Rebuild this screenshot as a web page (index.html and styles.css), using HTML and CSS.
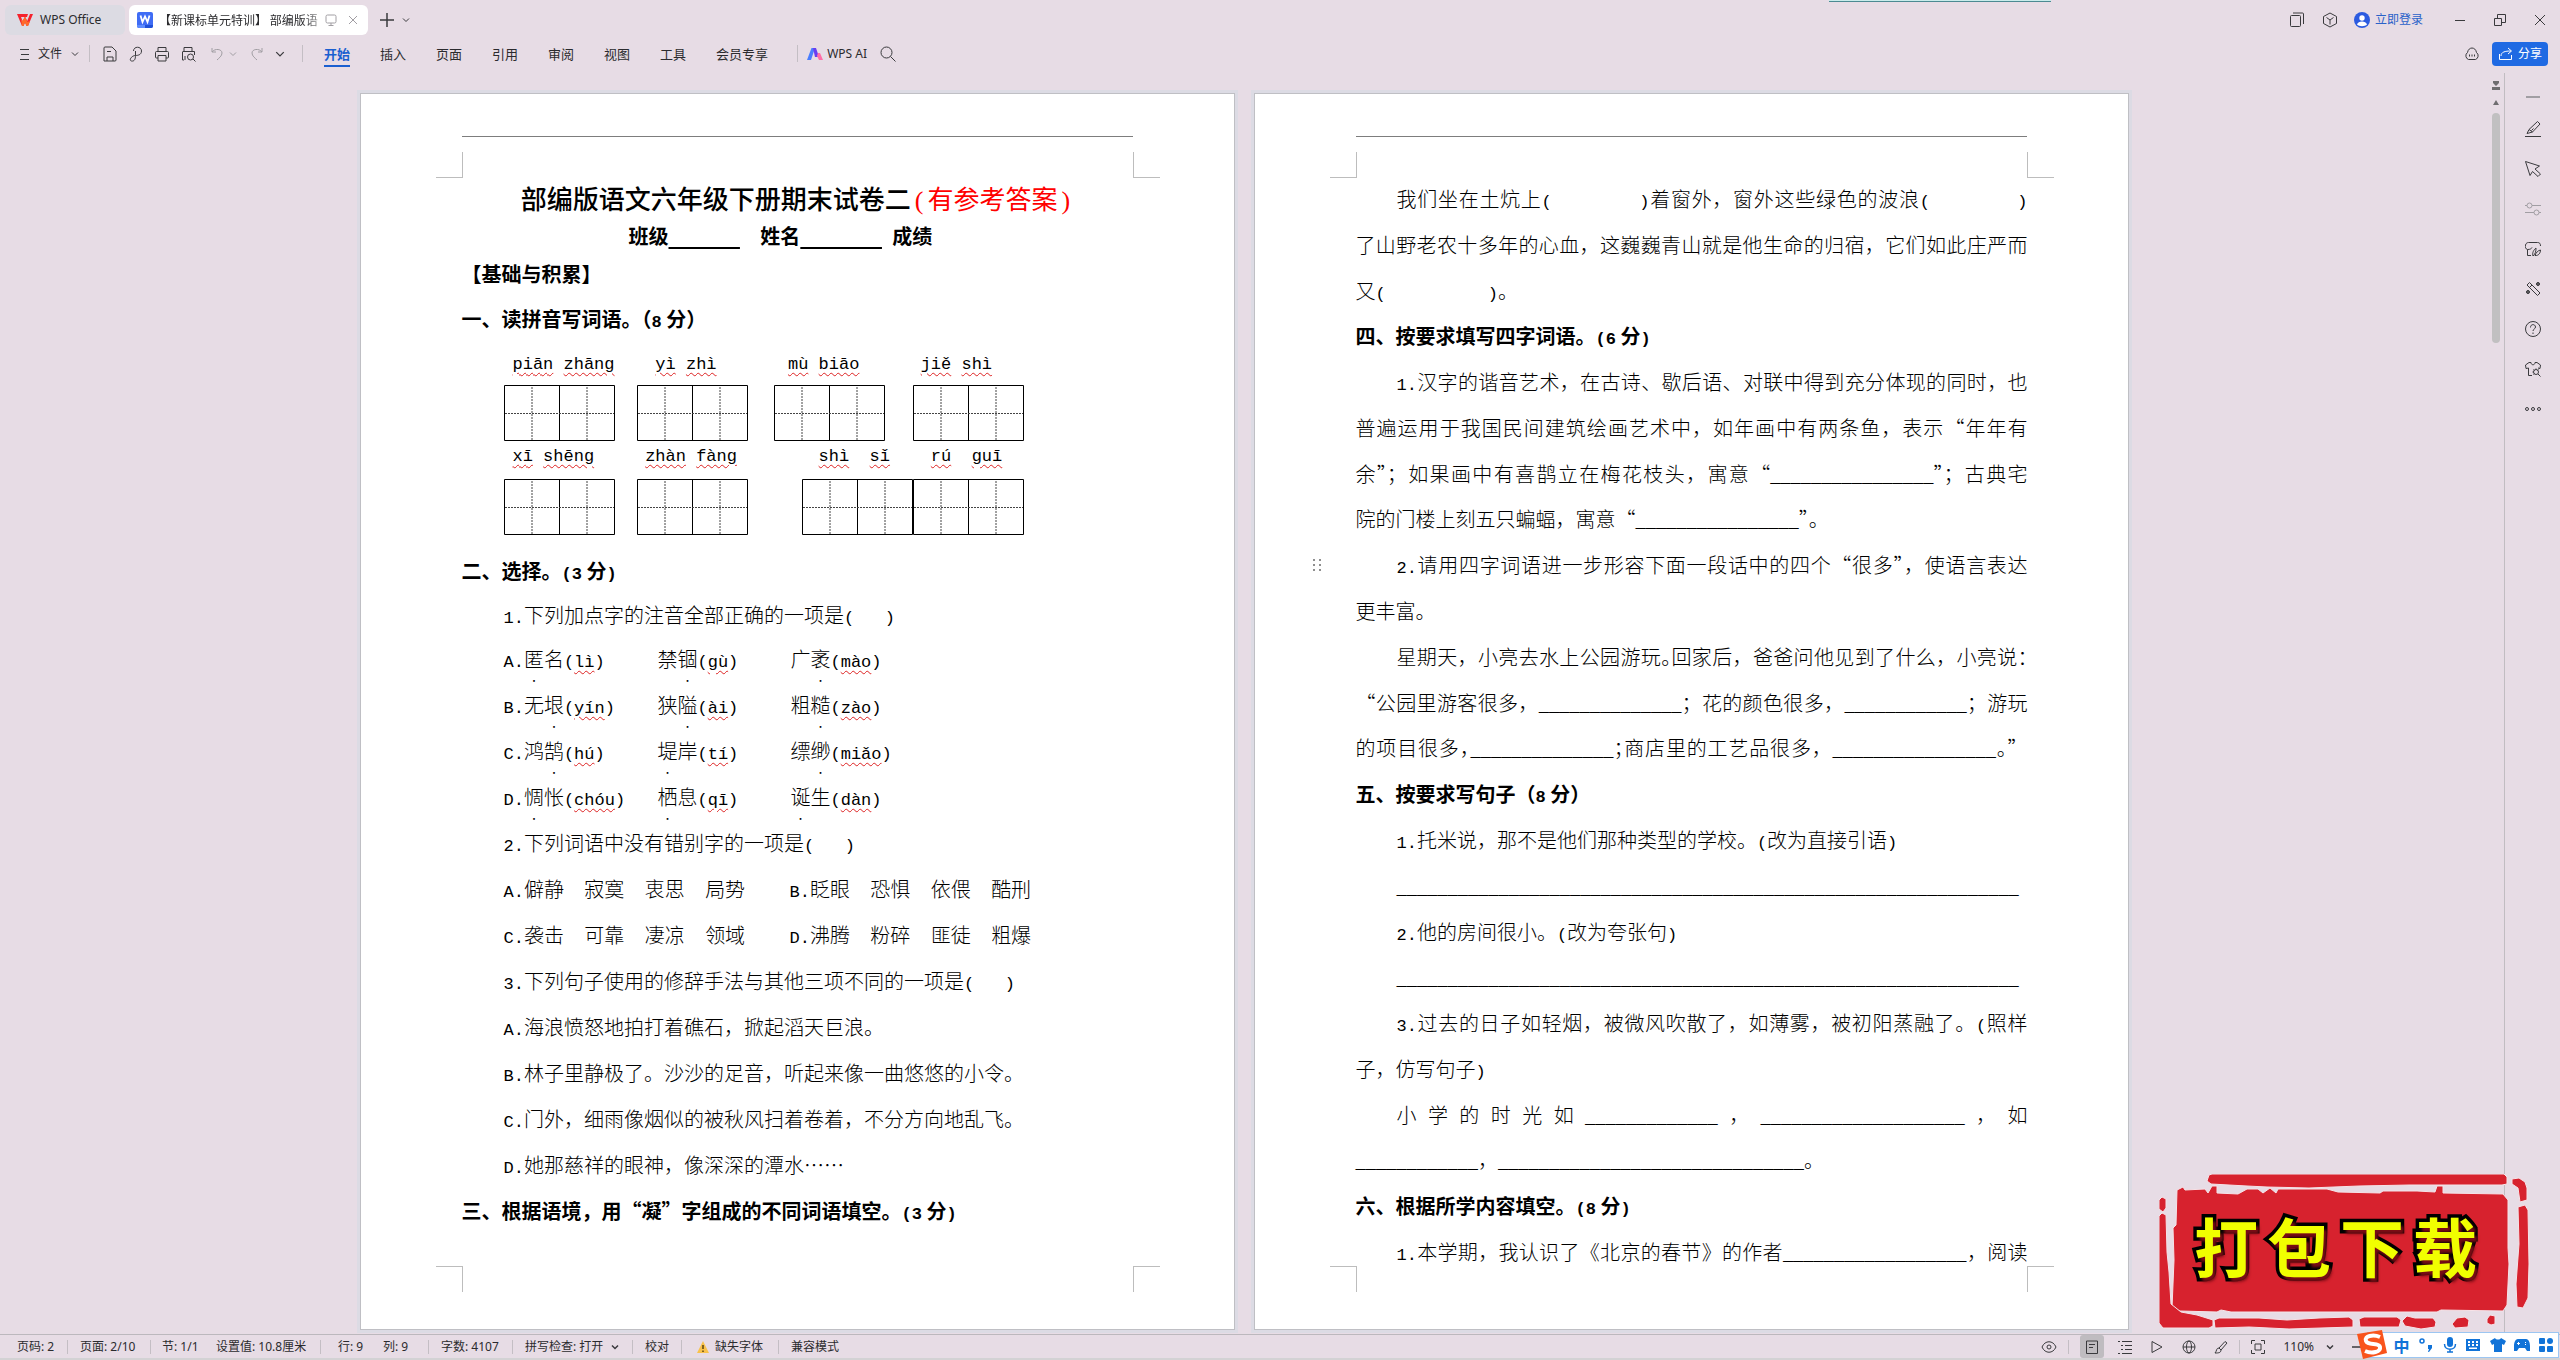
FILE: index.html
```html
<!DOCTYPE html>
<html lang="zh-CN">
<head>
<meta charset="utf-8">
<title>【新课标单元特训】 部编版语文 - WPS Office</title>
<link rel="stylesheet" href="styles.css">
</head>
<body>
<svg class="defs" aria-hidden="true">
  <symbol id="chev" viewBox="0 0 8 8"><path d="M1 2.5 4 5.5 7 2.5"/></symbol>
  <symbol id="tian" viewBox="0 0 111 56">
    <path d="M.5 .5h110v55H.5zM55.5 0v56"/>
    <path stroke-dasharray="2 1" d="M28 2v53M83 2v53M1 28.5h109" stroke="#444"/>
  </symbol>
</svg>

<header class="tabbar">
  <button class="tab home">
    <svg width="16" height="12" viewBox="0 0 16 12"><path fill="#f5222d" d="M0 0h11l-1 3H4l1.600 4L8 2.500 10.200 7 13 0h3l-5 12H9.500L8 8.500 6.500 12H5z"/><path fill="#ff6a2a" d="M6.500 12 8 8.500 9.500 12H11l2-5-2.500 1L8 2.500 5.600 7 4 5l1 7z"/></svg>
    <span>WPS Office</span>
  </button>
  <div class="tab active">
    <svg width="16" height="16" viewBox="0 0 16 16"><rect width="16" height="16" rx="2" fill="#3f6cf5"/><path d="M0 13h8v3H2a2 2 0 0 1-2-2z" fill="#5d8bff"/><path d="M8 13h8v1a2 2 0 0 1-2 2H8z" fill="#1f50d8"/><path d="M3.500 3.500 5.500 10 8 4.500 10.500 10l2-6.500" fill="none" stroke="#fff" stroke-width="1.800"/></svg>
    <span class="tabname">【新课标单元特训】 部编版语</span>
    <svg class="ic soft" width="14" height="14" viewBox="0 0 14 14"><rect x="2" y="2" width="10" height="8" rx="1.500"/><path d="M4.500 12.500h5M7 10v2.500"/></svg>
    <button class="flat" aria-label="关闭标签"><svg class="ic soft" width="10" height="10" viewBox="0 0 10 10"><path d="m1 1 8 8M9 1 1 9"/></svg></button>
  </div>
  <button class="flat plus" aria-label="新建"><svg class="ic thick" width="14" height="14" viewBox="0 0 14 14"><path d="M7 0v14M0 7h14"/></svg></button>
  <button class="flat" aria-label="标签列表"><svg class="ic" width="8" height="8"><use href="#chev"/></svg></button>
  <div class="toast"></div>
  <div class="winctl">
    <svg class="ic" width="16" height="16" viewBox="0 0 16 16"><rect x="1.500" y="3.500" width="10" height="11" rx="1"/><path d="M4 1h9.500a1 1 0 0 1 1 1v10"/></svg>
    <svg class="ic" width="16" height="16" viewBox="0 0 16 16"><path d="m8 1 6.500 3.500v7L8 15l-6.500-3.500v-7zM4.500 5.500 8 8l3.500-2.500M8 8v4.500"/></svg>
    <button class="flat login"><svg width="16" height="16" viewBox="0 0 16 16"><circle cx="8" cy="8" r="8" fill="#2c5be0"/><circle cx="8" cy="6" r="2.700" fill="#fff"/><path d="M3 12.500c1-4 9-4 10 0-2 2.300-8 2.300-10 0z" fill="#fff"/></svg>立即登录</button>
    <button class="flat w40" aria-label="最小化"><svg class="ic" width="10" height="10" viewBox="0 0 10 10"><path d="M0 5.500h10"/></svg></button>
    <button class="flat w40" aria-label="还原"><svg class="ic" width="14" height="14" viewBox="0 0 14 14"><path d="M1.500 5.500h7v7h-7zM4.500 5V1.500h8v8H9"/></svg></button>
    <button class="flat w40" aria-label="关闭"><svg class="ic" width="12" height="12" viewBox="0 0 12 12"><path d="m1 1 10 10M11 1 1 11"/></svg></button>
  </div>
</header>

<nav class="menubar">
  <button class="flat file"><svg class="ic" width="9" height="12" viewBox="0 0 9 12"><path d="M0 1.500h9M1 6.500h8M0 11.500h9"/></svg>文件<svg class="ic" width="8" height="8"><use href="#chev"/></svg></button>
  <i class="vsep"></i>
  <div class="quick">
    <svg class="ic" width="16" height="16" viewBox="0 0 16 16"><path d="M2 2a1 1 0 0 1 1-1h7l4 4v9a1 1 0 0 1-1 1H2zM5 5.500h4M5 15v-4h6v4"/></svg>
    <svg class="ic" width="16" height="16" viewBox="0 0 16 16"><path d="M5.500 5c0-5 8-5 8 0 0 4-4 4.500-6 4.500-4 0-7 5-4 5.500 3 .5 4-2 4-5.500V5"/></svg>
    <svg class="ic" width="16" height="16" viewBox="0 0 16 16"><path d="M4 5V1.500h8V5M4 12H2.500A1 1 0 0 1 1.500 11V6.500a1 1 0 0 1 1-1h11a1 1 0 0 1 1 1V11a1 1 0 0 1-1 1H12M4 9.500h8V15H4z"/></svg>
    <svg class="ic" width="16" height="16" viewBox="0 0 16 16"><path d="M4 5V1.500h8V5M4 14H2.500V6a.5.5 0 0 1 .5-.5h11.500V9M5 14v-4"/><circle cx="10.500" cy="11" r="3"/><path d="m13 13 2.500 2.500"/></svg>
  </div>
  <div class="undo">
    <svg class="ic soft" width="12" height="14" viewBox="0 0 12 14"><path d="M1 1v4h4M1 5c3-4 10-3 10 1 0 3-3 5-5 7"/></svg>
    <svg class="ic soft" width="8" height="8"><use href="#chev"/></svg>
    <svg class="ic soft redo" width="12" height="14" viewBox="0 0 12 14"><path d="M11 1v4H7M11 5C8 1 1 2 1 6c0 3 3 5 5 7"/></svg>
    <svg class="ic" width="10" height="10"><use href="#chev"/></svg>
  </div>
  <i class="vsep"></i>
  <div class="menus">
    <a href="#" class="on">开始</a><a href="#">插入</a><a href="#">页面</a><a href="#">引用</a><a href="#">审阅</a><a href="#">视图</a><a href="#">工具</a><a href="#">会员专享</a>
  </div>
  <i class="vsep"></i>
  <button class="flat ai"><svg width="16" height="12" viewBox="0 0 16 12"><path d="M4.500 0H8L4 12H0z" fill="#4a7dff"/><path d="M6 0h3l3 9H8z" fill="#6a3df0"/><path d="m11 5 2 0 3 7h-4l-2-4z" fill="#ff6ea8"/></svg>WPS AI</button>
  <button class="flat" aria-label="搜索"><svg class="ic" width="16" height="16" viewBox="0 0 16 16"><circle cx="6.500" cy="6.500" r="5.500"/><path d="m10.500 10.500 5 5"/></svg></button>
  <div class="share">
    <svg class="ic" width="16" height="14" viewBox="0 0 16 14"><path d="M4.500 12.500a4 4 0 0 1-1-7c1-6 8-6 9 0a4 4 0 0 1-1 7z"/><path d="M5 8.500h1M7.500 8.500h1M10 8.500h1" stroke-width="2"/></svg>
    <button class="sharebtn"><svg class="ic" width="16" height="14" viewBox="0 0 16 14"><path d="M1.500 7v5.500h12V8M3 9c0-4 4-5 10-5M10 1l3.500 3L10 7"/></svg>分享</button>
  </div>
</nav>

<main class="work">
  <div class="canvas">
    <article class="paper">
      <div class="headrule"></div>
      <div class="crop top"><i></i><i></i></div>
      <section class="body one">
        <h1>部编版语文六年级下册期末试卷二<em><span class="wl">(</span>有参考答案<span class="wl">)</span></em></h1>
        <p class="who">班级<u class="l">       </u><span class="l">  </span>姓名<u class="l">        </u><span class="l"> </span>成绩</p>
        <h2 class="h40">【基础与积累】</h2>
        <h2 class="h50">一、读拼音写词语。（<span class="l">8</span> 分）</h2>
        <p class="pin l"><s>piān</s> <s>zhāng</s>    <s>yì</s> <s>zhì</s>       <s>mù</s> <s>biāo</s>      <s>jiě</s> <s>shì</s></p>
        <div class="boxes a">
          <svg><use href="#tian"/></svg><svg><use href="#tian"/></svg><svg><use href="#tian"/></svg><svg><use href="#tian"/></svg>
        </div>
        <p class="pin low l"><s>xī</s> <s>shēng</s>     <s>zhàn</s> <s>fàng</s>        <s>shì</s>  <s>sǐ</s>    <s>rú</s>  <s>guī</s></p>
        <div class="boxes b">
          <svg><use href="#tian"/></svg><svg><use href="#tian"/></svg><svg><use href="#tian"/></svg><svg><use href="#tian"/></svg>
        </div>
        <h2 class="sec">二、选择。<span class="l">(3</span> 分<span class="l">)</span></h2>
        <p class="in h42"><span class="l">1.</span>下列加点字的注音全部正确的一项是<span class="l">(   )</span></p>
        <div class="opts">
          <p><span class="l">A.</span><b>匿</b>名<span class="l">(<s>lì</s>)</span></p><p>禁<b>锢</b><span class="l">(<s>gù</s>)</span></p><p>广<b>袤</b><span class="l">(<s>mào</s>)</span></p>
          <p><span class="l">B.</span>无<b>垠</b><span class="l">(<s>yín</s>)</span></p><p>狭<b>隘</b><span class="l">(<s>ài</s>)</span></p><p>粗<b>糙</b><span class="l">(<s>zào</s>)</span></p>
          <p><span class="l">C.</span>鸿<b>鹄</b><span class="l">(<s>hú</s>)</span></p><p><b>堤</b>岸<span class="l">(<s>tí</s>)</span></p><p>缥<b>缈</b><span class="l">(<s>miǎo</s>)</span></p>
          <p><span class="l">D.</span><b>惆</b>怅<span class="l">(<s>chóu</s>)</span></p><p><b>栖</b>息<span class="l">(<s>qī</s>)</span></p><p><b>诞</b>生<span class="l">(<s>dàn</s>)</span></p>
        </div>
        <p class="in"><span class="l">2.</span>下列词语中没有错别字的一项是<span class="l">(   )</span></p>
        <div class="words">
          <p><span class="l">A.</span>僻静<span class="l">  </span>寂寞<span class="l">  </span>衷思<span class="l">  </span>局势</p><p><span class="l">B.</span>眨眼<span class="l">  </span>恐惧<span class="l">  </span>依偎<span class="l">  </span>酷刑</p>
          <p><span class="l">C.</span>袭击<span class="l">  </span>可靠<span class="l">  </span>凄凉<span class="l">  </span>领域</p><p><span class="l">D.</span>沸腾<span class="l">  </span>粉碎<span class="l">  </span>匪徒<span class="l">  </span>粗爆</p>
        </div>
        <p class="in"><span class="l">3.</span>下列句子使用的修辞手法与其他三项不同的一项是<span class="l">(   )</span></p>
        <p class="in"><span class="l">A.</span>海浪愤怒地拍打着礁石，掀起滔天巨浪。</p>
        <p class="in"><span class="l">B.</span>林子里静极了。沙沙的足音，听起来像一曲悠悠的小令。</p>
        <p class="in"><span class="l">C.</span>门外，细雨像烟似的被秋风扫着卷着，不分方向地乱飞。</p>
        <p class="in"><span class="l">D.</span>她那慈祥的眼神，像深深的潭水……</p>
        <h2>三、根据语境，用“凝”字组成的不同词语填空。<span class="l">(3</span> 分<span class="l">)</span></h2>
      </section>
      <div class="crop bot"><i></i><i></i></div>
    </article>

    <article class="paper">
      <div class="headrule"></div>
      <div class="crop top"><i></i><i></i></div>
      <svg class="grip" width="10" height="14" viewBox="0 0 10 14"><path d="M1 2h2M7 2h2M1 7h2M7 7h2M1 12h2M7 12h2"/></svg>
      <section class="body two">
        <p class="ti j">我们坐在土炕上<span class="l">(        )</span>着窗外，窗外这些绿色的波浪<span class="l">(        )</span></p>
        <p class="j">了山野老农十多年的心血，这巍巍青山就是他生命的归宿，它们如此庄严而</p>
        <p>又<span class="l">(          )</span>。</p>
        <h2>四、按要求填写四字词语。<span class="l">(6</span> 分<span class="l">)</span></h2>
        <p class="ti j"><span class="l">1.</span>汉字的谐音艺术，在古诗、歇后语、对联中得到充分体现的同时，也</p>
        <p class="j">普遍运用于我国民间建筑绘画艺术中，如年画中有两条鱼，表示“年年有</p>
        <p class="j">余”；如果画中有喜鹊立在梅花枝头，寓意“<span class="l">________________</span>”；古典宅</p>
        <p>院的门楼上刻五只蝙蝠，寓意“<span class="l">________________</span>”。</p>
        <p class="ti j"><span class="l">2.</span>请用四字词语进一步形容下面一段话中的四个“很多”，使语言表达</p>
        <p>更丰富。</p>
        <p class="ti j">星期天，小亮去水上公园游玩<span class="half">。</span>回家后，爸爸问他见到了什么，小亮说<span class="half">：</span></p>
        <p class="j">“公园里游客很多，<span class="l">______________</span>；花的颜色很多，<span class="l">____________</span>；游玩</p>
        <p class="j">的项目很多<span class="half">，</span><span class="l">______________</span><span class="half">；</span>商店里的工艺品很多，<span class="l">________________</span>。”</p>
        <h2>五、按要求写句子（<span class="l">8</span> 分）</h2>
        <p class="ti"><span class="l">1.</span>托米说，那不是他们那种类型的学校。<span class="l">(</span>改为直接引语<span class="l">)</span></p>
        <p class="ti"><span class="l">_____________________________________________________________</span></p>
        <p class="ti"><span class="l">2.</span>他的房间很小。<span class="l">(</span>改为夸张句<span class="l">)</span></p>
        <p class="ti"><span class="l">_____________________________________________________________</span></p>
        <p class="ti j"><span class="l">3.</span>过去的日子如轻烟，被微风吹散了，如薄雾，被初阳蒸融了。<span class="l">(</span>照样</p>
        <p>子，仿写句子<span class="l">)</span></p>
        <p class="ti j">小学的时光如<span class="l">_____________</span>，<span class="l">____________________</span>，如</p>
        <p><span class="l">____________</span>，<span class="l">______________________________</span>。</p>
        <h2>六、根据所学内容填空。<span class="l">(8</span> 分<span class="l">)</span></h2>
        <p class="ti j"><span class="l">1.</span>本学期，我认识了《北京的春节》的作者<span class="l">__________________</span>，阅读</p>
      </section>
      <div class="crop bot"><i></i><i></i></div>
    </article>
  </div>

  <div class="scroll">
    <svg width="8" height="28" viewBox="0 0 8 28"><path fill="#6f6d70" d="M1 0h6v2L4 5 1 2zM0 6h8v3H0zM4 19l3 5H1z"/></svg>
    <div class="thumb"></div>
  </div>
  <aside class="side">
    <svg class="ic soft" width="16" height="16" viewBox="0 0 16 16"><path d="M1 8h14" stroke-width="2"/></svg>
    <svg class="ic" width="16" height="16" viewBox="0 0 16 16"><path d="M0 15.500h16M2 12.500l2-4 8.500-8 2.500 2.500-7.500 8zM4 8.500 7.500 11M6.500 9.500l2-2"/></svg>
    <svg class="ic" width="16" height="16" viewBox="0 0 16 16"><path d="m.5.5 14 4.500-4.500 3 5.500 5-2.500 2.500-5.500-5-2.500 4z"/></svg>
    <svg class="ic soft" width="16" height="16" viewBox="0 0 16 16"><path d="M0 4.500h2M7 4.500h9M0 11.500h9M14 11.500h2"/><circle cx="4.500" cy="4.500" r="2.500"/><circle cx="11.500" cy="11.500" r="2.500"/></svg>
    <svg class="ic" width="16" height="16" viewBox="0 0 16 16"><path d="M6 14.500H2.500v-6C.5 8 0 6 .5 4s2-2.500 3-2.500h9c2 0 3 1 3 3.500M2.500 8.500c3 0 4-1 4.500-2M8 15c-1-3 .5-6 3-8 0 3-.5 6-3 8zm2-.5c1-3 3-5 5.500-5.500 0 3-2 6-5.500 5.500z"/></svg>
    <svg class="ic" width="16" height="16" viewBox="0 0 16 16"><path d="m2 4 2.500-2.500L15 12l-2.500 2.500zM4.500 6.500 7 4M13 1v4M11 3h4M3 9v4M1 11h4"/><circle cx="13" cy="3" r="1.500"/><circle cx="3" cy="11" r="1.500"/></svg>
    <svg class="ic" width="16" height="16" viewBox="0 0 16 16"><circle cx="8" cy="8" r="7.500"/><path d="M5.500 6.500c0-4 5-3.500 5-.5 0 2-2.500 2-2.500 4M8 11.500v1.500"/></svg>
    <svg class="ic" width="16" height="16" viewBox="0 0 16 16"><path d="M7 14.500H3.500V7L1 7.500.5 4 4 1.500h2c0 3 4 3 4 0h2L15.500 4 15 7.500l-2-.5"/><circle cx="11" cy="11" r="2.500"/><path d="M11 7.500v1M7.500 11h1M13 13l2.500 2.500M8.500 8.500l1 1M13.500 8.500l-1 1M8.500 13.500l1-1"/></svg>
    <svg class="ic" width="16" height="16" viewBox="0 0 16 16"><circle cx="2" cy="8" r="1.500"/><circle cx="8" cy="8" r="1.500"/><circle cx="14" cy="8" r="1.500"/></svg>
  </aside>
</main>

<footer class="status">
  <span class="c1">页码: 2</span><i></i><span class="c2">页面: 2/10</span><i></i><span class="c3">节: 1/1</span><span class="c4">设置值: 10.8厘米</span><i></i><span class="c5">行: 9</span><span class="c6">列: 9</span><i></i><span class="c7">字数: 4107</span><i></i><button class="flat c8">拼写检查: 打开 <svg class="ic thick" width="8" height="8"><use href="#chev"/></svg></button><i></i><span class="c9">校对</span><i></i><span class="c10"><svg width="12" height="12" viewBox="0 0 12 12"><path d="M6 0 12 12H0z" fill="#f9c24c"/><path d="M6 4v4M6 9.500V11" stroke="#5a4310" stroke-width="1.500"/></svg>缺失字体</span><i></i><span class="c11">兼容模式</span>
  <div class="views">
    <svg class="ic" width="16" height="14" viewBox="0 0 16 14"><path d="M1 7c3-7 11-7 14 0-3 7-11 7-14 0z"/><circle cx="8" cy="7" r="2"/></svg>
    <i></i>
    <button class="flat view on" aria-label="页面视图"><svg class="ic" width="14" height="14" viewBox="0 0 14 14"><path d="M1.500 1h11v12.500h-11zM4 4.500h6M4 7.500h4"/></svg></button>
    <svg class="ic" width="14" height="14" viewBox="0 0 14 14"><path d="M0 1.500h2M4 1.500h10M3 5.500h2M7 5.500h7M3 9.500h2M7 9.500h7M0 13.500h2M4 13.500h10"/></svg>
    <svg class="ic" width="14" height="14" viewBox="0 0 14 14"><path d="M2 1.500 12 7 2 12.500z"/></svg>
    <svg class="ic" width="14" height="14" viewBox="0 0 14 14"><circle cx="7" cy="7" r="6"/><ellipse cx="7" cy="7" rx="2.500" ry="6"/><path d="M1 7h12"/></svg>
    <svg class="ic" width="14" height="14" viewBox="0 0 14 14"><path d="M5 8 11 1.500l2 1.500L7 10zM5 8c-3 0-2 3-4 5 3 0 6 0 6-3z"/></svg>
    <i></i>
    <svg class="ic" width="14" height="14" viewBox="0 0 14 14"><path d="M.5 4V.5H4M10 .5h3.500V4M13.500 10v3.500H10M4 13.500H.5V10M4 4h6v6H4z"/></svg>
    <button class="flat zoom">110% <svg class="ic thick" width="8" height="8"><use href="#chev"/></svg></button>
    <svg class="ic thick" width="10" height="10" viewBox="0 0 10 10"><path d="M0 5h10"/></svg>
  </div>
</footer>

<div class="stamp">
  <svg width="372" height="156" viewBox="0 0 372 156">
    <g fill="#d7222e" stroke="#f6e3e8" stroke-width="1" stroke-linejoin="round">
      <path d="M50 1 53 0H345L348 3V10L343 11H250L200 12 150 14 108 13 88 12 52 10 48 7z"/>
      <path d="M18 16 24 13 26 16 46 15 49 19 53 12 58 12 58 19 79 20 88 15 99 15 104 19 111 14 117 19 119 15 168 15 179 18 221 19 224 17 258 17 276 18 278 12 284 12 284 19 344 20 349 26 349 74 350 90 348 131 344 137 282 136 278 138 72 138 62 136 58 138 21 137 13 134 15 86 14 54 17 51z"/>
      <path d="M0 26 3 23 7 25V34L4 38 0 35z"/>
      <path d="M0 42 3 39 7 41 8 78 10 98 12 130 22 138 38 141 54 146 54 152 50 154H4L0 149z"/>
      <path d="M55 146 60 144H100L128 146 160 144 190 143 194 146 194 153 130 155 90 153 56 154z"/>
      <path d="M200 145 205 143H238L242 146 240 153H201z"/>
      <path d="M243 147 248 142 256 144 274 144 277 148 276 153 262 155 246 152z"/>
      <path d="M293 150 298 144 306 143 310 146 309 153 296 154z"/>
      <path d="M328 145 331 141 336 142V150L332 151 328 149z"/>
      <path d="M353 5 360 4 366 8 368 14V26L361 28 359 14 353 10z"/>
      <path d="M359 33 366 31 369 36 370 90 369 124 364 134 358 133 357 110 360 70z"/>
    </g>
  </svg>
  <div class="stamptext"><span>打</span><span>包</span><span>下</span><span>载</span></div>
</div>

<div class="ime">
  <svg class="sogou" width="32" height="30" viewBox="0 0 32 30"><path d="M1 4 26 0l5 23-24 6z" fill="#f9541c"/><path d="M24 7C17 4 8 6 10 11s13 1 14 6-8 7-15 4" fill="none" stroke="#fff" stroke-width="4"/></svg>
  <b>中</b>
  <svg width="16" height="16" viewBox="0 0 16 16"><circle cx="4" cy="4" r="2" fill="none" stroke="#1173d8" stroke-width="1.500"/><path d="M10 8h4v3l-3 4h-1l1-3h-1z"/></svg>
  <svg width="14" height="16" viewBox="0 0 14 16"><rect x="4" width="6" height="10" rx="3"/><path d="M1.500 7c0 7 11 7 11 0M7 12v3M4 15h6" fill="none" stroke="#1173d8" stroke-width="1.500"/></svg>
  <svg width="16" height="14" viewBox="0 0 16 14"><path fill-rule="evenodd" d="M1 1h14v12H1zM3 3v2h2V3zm4 0v2h2V3zm4 0v2h2V3zM3 6v2h2V6zm4 0v2h2V6zm4 0v2h2V6zM4 9.500V11h8V9.500z"/></svg>
  <svg width="16" height="14" viewBox="0 0 16 14"><path d="M5 0c1 2 5 2 6 0l5 3-2 4-2-1v8H4V6L2 7 0 3z"/></svg>
  <svg width="16" height="14" viewBox="0 0 16 14"><path fill-rule="evenodd" d="M4 1h8c3 0 4 4 4 7v5h-3l-2-3H5l-2 3H0V8c0-3 1-7 4-7zM4 4v1H3v1h1v1h1V6h1V5H5V4zm7 0v1h1V4zm0 2v1h1V6z"/></svg>
  <svg width="14" height="14" viewBox="0 0 14 14"><rect width="6" height="6" rx="1"/><circle cx="11" cy="3" r="3"/><rect y="8" width="6" height="6" rx="1"/><rect x="8" y="8" width="6" height="6" rx="1"/></svg>
</div>
</body>
</html>
```
FILE: styles.css
```css
* { box-sizing: border-box; }
body {
  margin: 0;
  height: 100vh;
  display: flex;
  flex-direction: column;
  background: #e7dce5;
  color: #2b2b2e;
  font: 12px/16px "Noto Sans", "Noto Sans CJK SC", sans-serif;
  overflow: hidden;
}
svg { flex: none; }
.defs { position: absolute; width: 0; height: 0; }
p, h1, h2 { margin: 0; }
.ic { fill: none; stroke: #3a3a3d; stroke-width: 1; }
.ic.soft { stroke: #a19ea3; }
.ic.thick { stroke-width: 1.5; }
.flat { border: 0; background: none; padding: 0; font: inherit; color: inherit; display: flex; align-items: center; }

/* title bar */
.tabbar { height: 40px; display: flex; align-items: center; padding: 0 0 0 5px; }
.tab { height: 30px; border: 0; border-radius: 6px; display: flex; align-items: center; font: inherit; color: inherit; }
.home { width: 120px; padding: 0 12px; gap: 7px; background: #dcdbe3; margin-right: 4px; }
.active { width: 239px; padding: 0 10px 0 8px; background: #fff; }
.tabname {
  width: 162px; margin: 0 3px 0 6px; white-space: nowrap; font-family: "Noto Sans CJK SC", sans-serif;
  mask-image: linear-gradient(90deg, #000 88%, #0006);
}
.active .flat { margin-left: 10px; }
.plus { margin: 0 8px 0 12px; }
.toast { margin-left: auto; align-self: flex-start; width: 222px; height: 2px; background: #c9eceb; border-bottom: 1px solid #4c8a92; }
.winctl { margin-left: 238px; display: flex; align-items: center; gap: 17px; }
.login { gap: 5px; color: #2a62c9; margin: 0 0 0 -1px; }
.w40 { width: 40px; justify-content: center; margin-right: -17px; }
.winctl .w40:last-child { margin-right: 0; }

/* menu bar */
.menubar { height: 33px; display: flex; align-items: center; padding: 0 12px 6px 20px; }
.file { gap: 9px; width: 69px; }
.vsep { width: 1px; height: 17px; background: #c4bec4; }
.quick { display: flex; gap: 10px; margin-left: 12px; }
.undo { display: flex; align-items: center; width: 78px; margin: 0 13px 0 15px; gap: 6px; }
.redo { margin: 0 6px 0 8px; }
.menus { display: flex; gap: 30px; margin: 0 29px 0 21px; font-size: 13px; }
.menus a { color: inherit; text-decoration: none; line-height: 20px; padding: 4px 0 1px; border-bottom: 2px solid transparent; }
.menus .on { color: #1a5fd0; font-weight: 700; border-color: #1a5fd0; }
.ai { gap: 4px; margin: 0 13px 0 9px; }
.share { margin-left: auto; display: flex; align-items: center; gap: 12px; }
.sharebtn { width: 56px; height: 24px; border: 0; border-radius: 4px; background: #1f6ae3; color: #fff; font: inherit; padding: 0 6px; display: flex; align-items: center; gap: 4px; }
.sharebtn .ic { stroke: #fff; }

/* document */
.work { flex: 1; min-height: 0; display: flex; }
.canvas { flex: 1; display: flex; justify-content: center; gap: 21px; padding: 21px 0 5px; }
.paper {
  width: 873px; background: #fff; box-shadow: 0 0 0 1px #bfbfc4, 0 0 0 4px #dcdbe4;
  display: flex; flex-direction: column; position: relative; padding-bottom: 37px;
}
.headrule { flex: none; height: 43px; margin: 0 101px 15px 101px; border-bottom: 1px solid #7d7d7d; }
.crop { flex: none; height: 26px; display: flex; justify-content: space-between; padding: 0 74px 0 75px; }
.crop i { width: 27px; border: 0 solid #bdbdbd; }
.crop i:first-child { border-right-width: 1px; }
.crop i:last-child { border-left-width: 1px; }
.top i { border-bottom-width: 1px; }
.bot i { border-top-width: 1px; }
.body { flex: 1; min-height: 0; margin: 0 100px 0 101px; color: #000; font: 300 20px/46px "Noto Sans CJK SC", sans-serif; white-space: nowrap; }
.l { font-family: "Liberation Mono", monospace; font-size: 17px; line-height: 1; font-weight: 400; white-space: pre; }
.body h1 { font-size: 26px; font-weight: 500; line-height: 40px; text-align: center; }
.body h1 em { font-style: normal; font-weight: 400; color: #f00; }
.wl { font-family: "Liberation Serif", serif; padding: 0 4px; line-height: 1; }
.who { font-weight: 700; line-height: 36px; margin-left: 167px; }
.who u { text-decoration-thickness: 2px; text-underline-offset: 3px; }
.body h2 { font-size: 20px; font-weight: 700; line-height: inherit; }
.body h2 .l { font-weight: 700; }
.body .h40 { line-height: 40px; }
.body .h50 { line-height: 50px; }
.h42 { line-height: 42px; }
.sec { padding-top: 13px; }
.pin { line-height: 41px; padding-left: 51px; }
.low { line-height: 32px; padding-bottom: 6px; }
s { text-decoration: underline wavy #d22 1px; text-underline-offset: 3px; }
.boxes { display: grid; padding-left: 42px; height: 56px; }
.a { grid-template-columns: 133px 137px 139px 111px; }
.b { grid-template-columns: 133px 165px 111px 111px; }
.boxes svg { width: 111px; height: 56px; fill: none; stroke: #000; }
.in, .opts, .words { padding-left: 42px; }
.opts { display: grid; grid-template-columns: 154px 133px auto; }
.opts p { height: 46px; }
.opts b { font-weight: 300; line-height: 1; text-emphasis: filled dot; text-emphasis-position: under right; }
.words { display: grid; grid-template-columns: 286px auto; }
.two { display: flex; flex-direction: column; justify-content: space-between; line-height: 24px; padding: 9px 0 2px; }
.two > * { height: 24px; }
.ti { text-indent: 41px; }
.j { text-align: justify; text-align-last: justify; white-space: normal; }
.half { font-feature-settings: "halt"; }
.grip { position: absolute; left: 57px; top: 464px; stroke: #8f8f8f; stroke-width: 2; }

/* scroll bar and side tools */
.scroll { width: 16px; padding: 8px 4px 0; }
.scroll svg { display: block; }
.thumb { width: 8px; height: 230px; margin-top: 4px; border-radius: 4px; background: #c1c0c1; }
.side { width: 56px; border-left: 1px solid #c1bcc1; display: flex; flex-direction: column; align-items: center; gap: 24px; padding: 16px 0 0 1px; }
.side svg:first-child { margin-bottom: -8px; }

/* status bar */
.status { height: 26px; border-top: 1px solid #bcb8bd; border-bottom: 2px solid #d3d2d4; display: flex; align-items: center; padding-left: 17px; white-space: nowrap; }
.status i { width: 1px; height: 14px; background: #c4bec4; }
.c1 { width: 50px; }
.c2 { width: 82px; padding-left: 12px; }
.c3 { width: 65px; padding-left: 11px; }
.c4 { width: 104px; }
.c5 { width: 62px; padding-left: 17px; }
.c6 { width: 45px; }
.c7 { width: 83px; padding-left: 12px; }
.c8 { width: 119px; padding-left: 12px; gap: 8px; }
.c9 { width: 48px; padding-left: 12px; }
.c10 { width: 96px; padding-left: 15px; display: flex; align-items: center; gap: 6px; }
.c11 { padding-left: 12px; }
.views { margin: 0 198px 0 auto; display: flex; align-items: center; gap: 18px; }
.views i { margin: 0 -7px; }
.view { width: 24px; height: 23px; justify-content: center; margin-right: -4px; border-radius: 3px; }
.view.on { background: #bfbcc0; }
.zoom { gap: 12px; }

/* download stamp */
.stamp { position: absolute; right: 29px; bottom: 30px; width: 372px; height: 156px; }
.stamptext {
  position: absolute; inset: 28px 0 0 35px; display: flex; gap: 9px;
  font: 700 64px/84px "Noto Sans CJK SC", sans-serif; color: #f1ff00;
  -webkit-text-stroke: 7px #000; paint-order: stroke fill; text-shadow: 3px 4px 3px #7a0d15;
}

/* input method bar */
.ime {
  position: absolute; right: 1px; bottom: 2px; width: 192px; height: 26px; background: #fff; border: 1px solid #9cc6f2;
  display: flex; align-items: center; justify-content: space-between; padding: 0 5px 0 0; fill: #1173d8; color: #1173d8;
}
.ime b { font: 700 16px/24px "Noto Sans CJK SC", sans-serif; margin-left: -3px; }
.sogou { margin-left: -12px; }
```
